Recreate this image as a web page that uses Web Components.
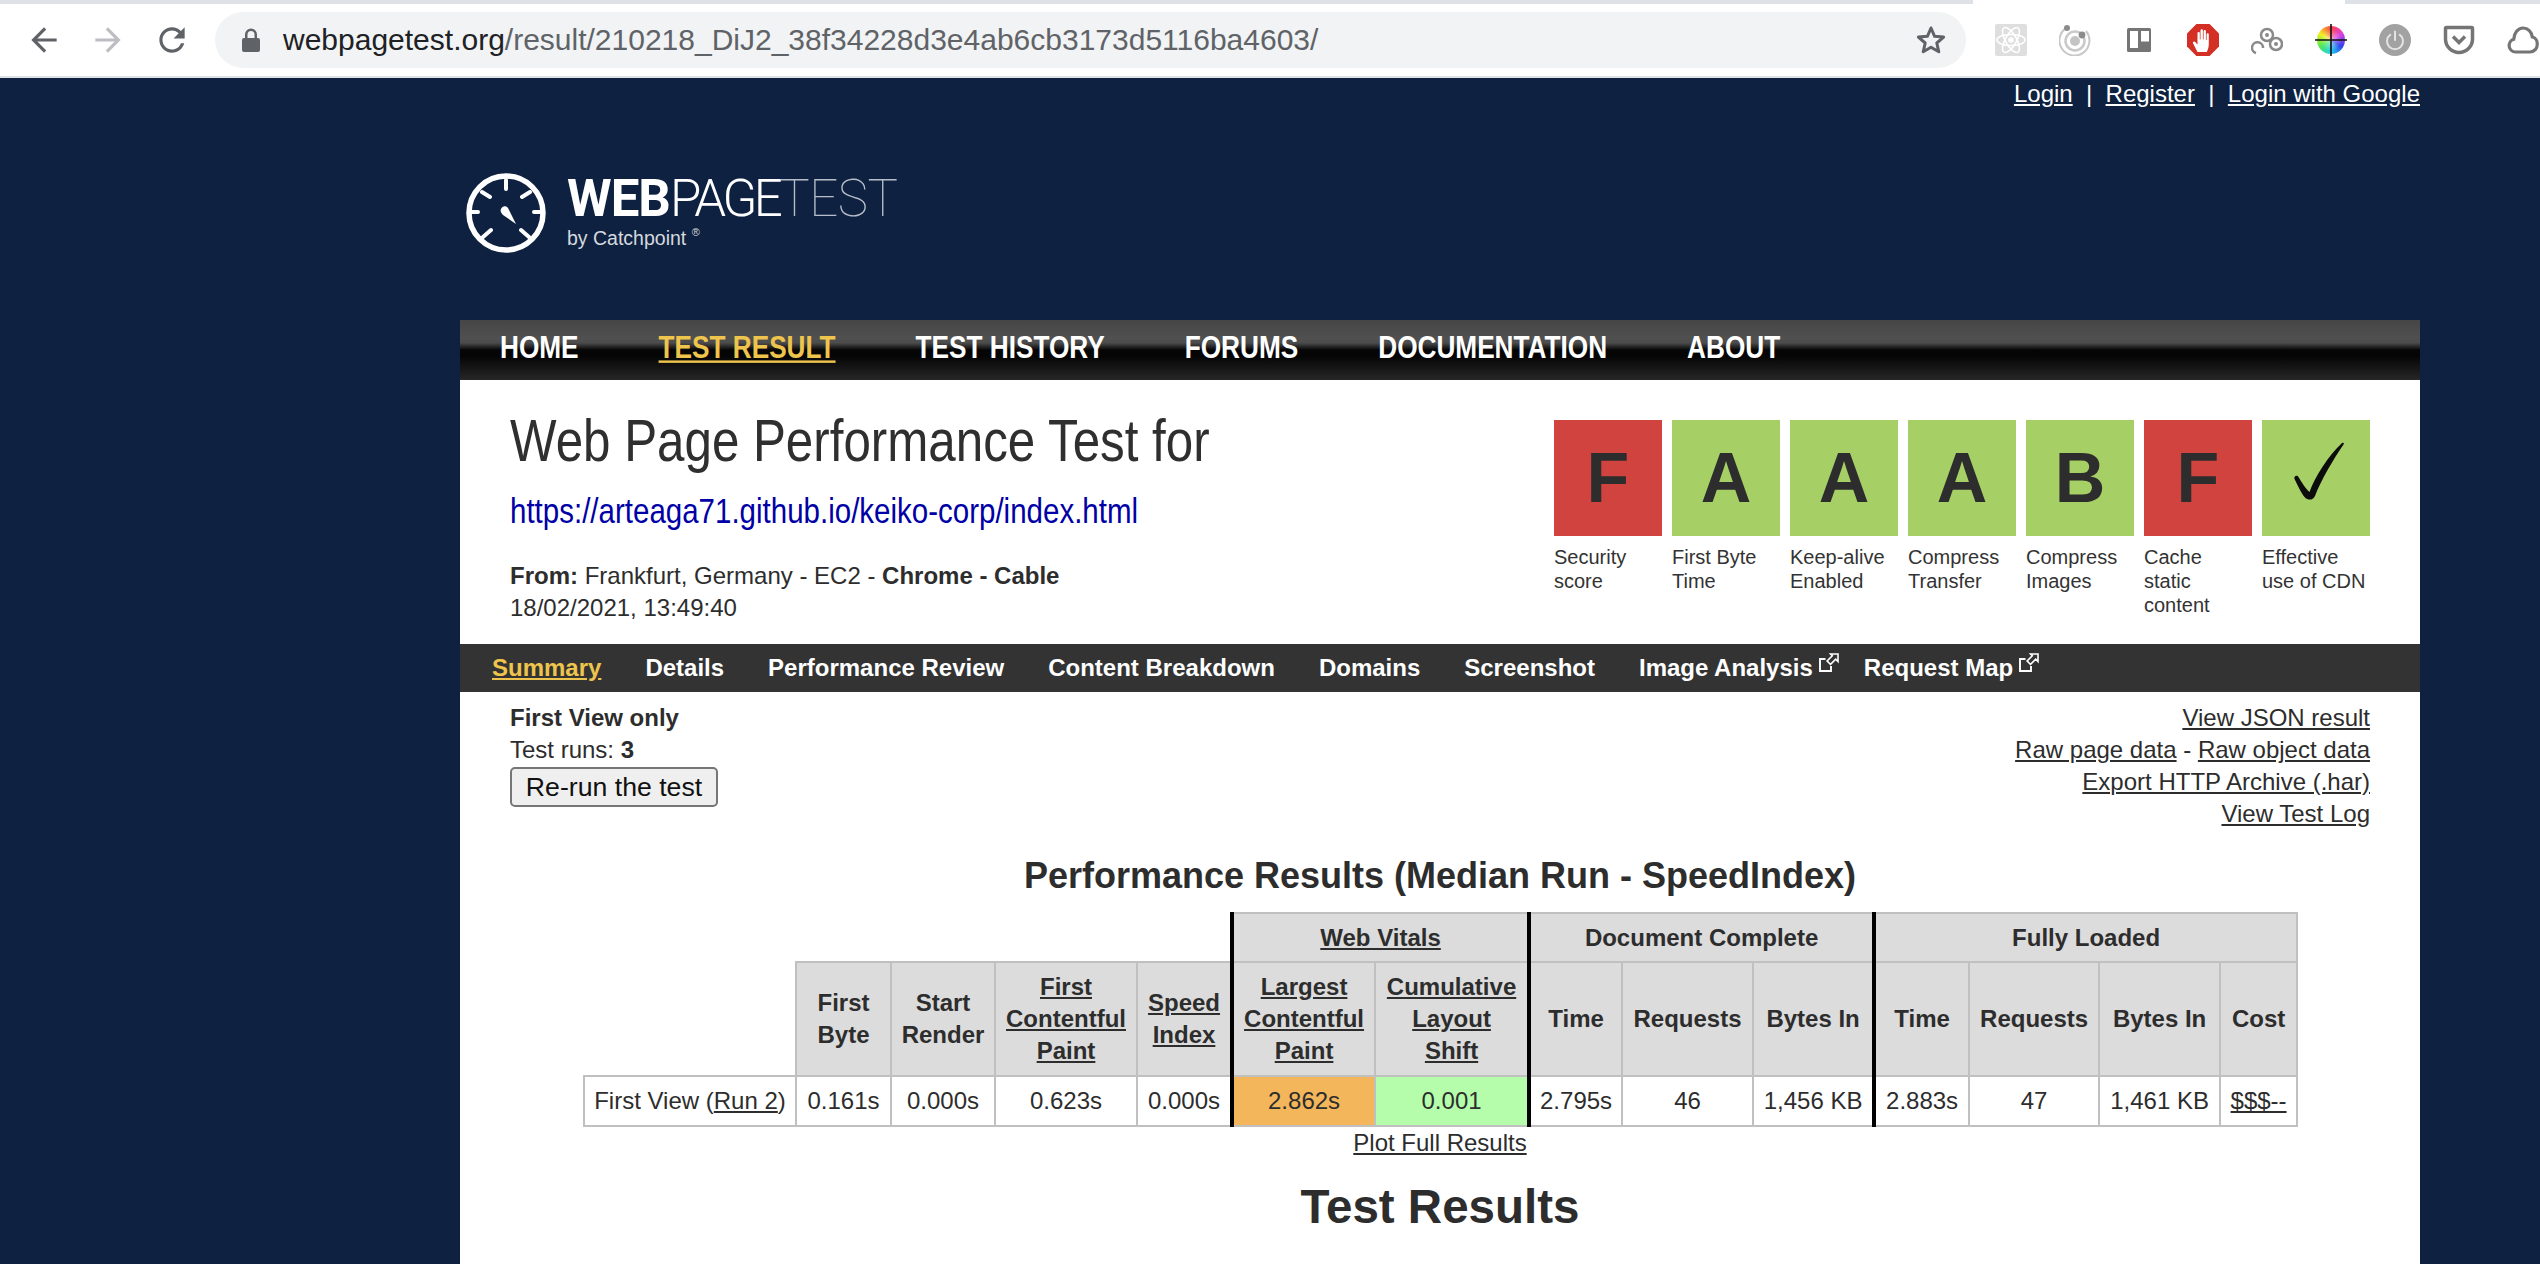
<!DOCTYPE html>
<html lang="en">
<head>
<meta charset="utf-8">
<title>WebPageTest result</title>
<style>
  html, body { margin: 0; height: 100%; overflow: hidden; background: #0e2140; }
  body { font: 24px/32px "Liberation Sans", Arial, sans-serif; color: #2d2d2d; }
</style>
</head>
<body>
<browser-bar url-host="webpagetest.org" url-path="/result/210218_DiJ2_38f34228d3e4ab6cb3173d5116ba4603/"></browser-bar>
<wpt-page>
  <top-links></top-links>
  <site-logo></site-logo>
  <main-nav></main-nav>
  <test-heading>
    <grade-box grade="F" tone="bad">Security score</grade-box>
    <grade-box grade="A" tone="good">First Byte Time</grade-box>
    <grade-box grade="A" tone="good">Keep-alive Enabled</grade-box>
    <grade-box grade="A" tone="good">Compress Transfer</grade-box>
    <grade-box grade="B" tone="good">Compress Images</grade-box>
    <grade-box grade="F" tone="bad">Cache static content</grade-box>
    <grade-box tone="good">Effective use of CDN</grade-box>
  </test-heading>
  <sub-nav></sub-nav>
  <test-info></test-info>
  <results-table></results-table>
</wpt-page>

<script>
class BrowserBar extends HTMLElement {
    constructor() {
        super();
        this.attachShadow({ mode: 'open' });
        this.shadowRoot.innerHTML = `<style>
        :host { display: flex; align-items: center; height: 72px; padding-left: 25px; background: #fff;
          border-top: 4px solid #dee1e6; border-bottom: 2px solid #dee1e6; position: relative; }
        .tab { position: absolute; left: 1973px; width: 372px; top: -4px; height: 4px; background: #fff; }
        .nav { width: 38px; height: 38px; margin-right: 26px; fill: #5f6368; flex: none; }
        .nav.off { fill: #bcbec1; }
        .omni { flex: none; width: 1751px; height: 56px; box-sizing: border-box; margin-left: -2px; margin-right: 29px;
          padding: 0 20px 0 27px; border-radius: 28px; background: #f1f3f4; display: flex; align-items: center;
          font-size: 30px; color: #5f6368; }
        .lock { width: 18px; height: 24px; margin-right: 23px; fill: #5f6368; }
        .host { color: #202124; }
        .star { margin-left: auto; width: 30px; height: 30px; fill: none; stroke: #5f6368; stroke-width: 3; stroke-linejoin: round; }
        .ext { display: flex; gap: 32px; flex: none; }
        .ext svg { width: 32px; height: 32px; display: block; }
        .wheel { width: 32px; height: 32px; position: relative; }
        .wheel i { display: block; position: absolute; inset: 2px; border-radius: 50%;
          background: radial-gradient(rgba(255,255,255,.55), rgba(255,255,255,0) 55%),
            conic-gradient(#f44 0, #e040e0 60deg, #3040f0 120deg, #20d0f0 180deg, #50e850 240deg, #f0f020 300deg, #f44 360deg); }
        .wheel svg { position: absolute; left: 0; top: 0; }
        </style>
        <div class="tab"></div>
        <svg class="nav" viewBox="0 0 24 24"><path d="M20 11H7.83l5.59-5.59L12 4l-8 8 8 8 1.41-1.41L7.83 13H20v-2z"/></svg>
        <svg class="nav off" viewBox="0 0 24 24"><path d="M4 11h12.17l-5.59-5.59L12 4l8 8-8 8-1.41-1.41L16.17 13H4v-2z"/></svg>
        <svg class="nav" viewBox="0 0 24 24"><path d="M17.65 6.35C16.2 4.9 14.21 4 12 4c-4.42 0-7.99 3.58-7.99 8s3.57 8 7.99 8c3.73 0 6.84-2.55 7.73-6h-2.08c-.82 2.33-3.04 4-5.65 4-3.31 0-6-2.69-6-6s2.69-6 6-6c1.66 0 3.14.69 4.22 1.78L13 11h7V4l-2.35 2.35z"/></svg>
        <div class="omni">
          <svg class="lock" viewBox="0 0 18 24"><path d="M2 10h1V6.500a6 6 0 0 1 12 0V10h1a2 2 0 0 1 2 2v10a2 2 0 0 1-2 2H2a2 2 0 0 1-2-2V12a2 2 0 0 1 2-2zm3.500 0h7V6.500a3.500 3.500 0 0 0-7 0z"/></svg>
          <span><span class="host">${this.getAttribute('url-host')}</span>${this.getAttribute('url-path')}</span>
          <svg class="star" viewBox="0 0 30 30"><path d="M15 3l3.600 8.300 9 .8-6.800 5.900 2 8.800-7.800-4.600-7.800 4.600 2-8.800-6.800-5.900 9-.8z"/></svg>
        </div>
        <div class="ext">
          <svg viewBox="0 0 32 32"><rect width="32" height="32" rx="2" fill="#dedede"/><g fill="none" stroke="#fff" stroke-width="1.600"><ellipse cx="16" cy="16" rx="14" ry="5.500"/><ellipse cx="16" cy="16" rx="14" ry="5.500" transform="rotate(60 16 16)"/><ellipse cx="16" cy="16" rx="14" ry="5.500" transform="rotate(120 16 16)"/></g><circle cx="16" cy="16" r="2.800" fill="#fff"/></svg>
          <svg viewBox="0 0 32 32"><g fill="none" stroke="#c9c9c9"><path d="M9 3A15 15 0 1 0 27 7" stroke-width="2"/><circle cx="16" cy="17" r="9.500" stroke-width="2.500"/></g><circle cx="16" cy="17" r="5" fill="#c4c4c4"/><circle cx="8" cy="4" r="3" fill="#8c8c8c"/><circle cx="23" cy="11" r="3.400" fill="#8c8c8c"/></svg>
          <svg viewBox="0 0 32 32"><rect x="4" y="4" width="24" height="24" rx="1.500" fill="#757575"/><rect x="7" y="7" width="8" height="17" fill="#fff"/><rect x="18" y="7" width="8" height="10.500" fill="#fff"/></svg>
          <svg viewBox="0 0 32 32"><path d="M9.400 0h13.200L32 9.400v13.200L22.600 32H9.400L0 22.600V9.400z" fill="#d32f25"/><path d="M10.500 28c-1.500-3-3.500-6.500-4.500-8.700-.7-1.600 1.200-2.600 2.300-1.300l2.200 2.700V9.300c0-1.700 2.300-1.700 2.300 0V15.500h.7V6.500c0-1.700 2.400-1.700 2.400 0v9h.7V7.300c0-1.700 2.300-1.700 2.300 0v8.700h.7v-5.500c0-1.600 2.200-1.600 2.200 0V20c0 3.300-1 6-2 8z" fill="#fff"/></svg>
          <svg viewBox="0 0 32 32"><g fill="none" stroke="#8a8a8a" stroke-width="2.500"><path d="M5 29a5.500 5.500 0 1 1 7-5"/><circle cx="16" cy="11" r="6"/><circle cx="25" cy="20" r="6"/></g><g fill="#8a8a8a"><circle cx="16" cy="11" r="2"/><circle cx="25" cy="20" r="2"/></g></svg>
          <div class="wheel"><i></i><svg viewBox="0 0 32 32"><path d="M16 0v32M0 16h32" stroke="#111" stroke-width="1.600"/></svg></div>
          <svg viewBox="0 0 32 32"><circle cx="16" cy="16" r="16" fill="#a2a2a2"/><g fill="none" stroke="#e4e4e4" stroke-width="2" stroke-linecap="round"><path d="M11.300 10.800a8 8 0 1 0 9.400 0"/><path d="M16 7.500V16"/></g></svg>
          <svg viewBox="0 0 32 32"><path d="M3.500 3.500h25c.6 0 1 .4 1 1V15a13.500 13.500 0 0 1-27 0V4.500c0-.6.400-1 1-1z" fill="none" stroke="#757575" stroke-width="3.500"/><path d="M10 12.500l6 6 6-6" fill="none" stroke="#757575" stroke-width="3.500"/></svg>
          <svg viewBox="0 0 32 32"><path d="M8.500 28a6.500 6.500 0 0 1-1.800-12.700C7 9 11 4 16 4c5 0 8.700 4 9.300 9 3 .6 5 3.500 5 7 0 4.500-3 8-7.300 8z" fill="none" stroke="#757575" stroke-width="3.200"/></svg>
        </div>`;
    }
}
customElements.define('browser-bar', BrowserBar);

class WptPage extends HTMLElement {
    constructor() {
        super();
        this.attachShadow({ mode: 'open' });
        this.shadowRoot.innerHTML = `<style>
        :host { display: flex; flex-direction: column; width: 1960px; margin-left: 460px; }
        </style><slot></slot>`;
    }
}
customElements.define('wpt-page', WptPage);

class TopLinks extends HTMLElement {
    constructor() {
        super();
        this.attachShadow({ mode: 'open' });
        this.shadowRoot.innerHTML = `<style>
        :host { display: flex; justify-content: flex-end; height: 32px; color: #fff; white-space: pre; }
        a { color: inherit; text-decoration: underline; }
        </style><a href="#">Login</a>  |  <a href="#">Register</a>  |  <a href="#">Login with Google</a>`;
    }
}
customElements.define('top-links', TopLinks);

class SiteLogo extends HTMLElement {
    constructor() {
        super();
        this.attachShadow({ mode: 'open' });
        this.shadowRoot.innerHTML = `<style>
        :host { display: flex; align-items: center; gap: 21px; height: 210px; box-sizing: border-box; padding: 0 0 4px 6px; color: #fff; }
        svg { width: 80px; height: 80px; flex: none; }
        .name { font: 100 51px/44px Roboto, "Liberation Sans", sans-serif; white-space: nowrap; color: #b6bdc9; letter-spacing: -.5px; }
        .name b { font-weight: 700; color: #fff; letter-spacing: -1px; }
        .name i { font-style: normal; font-weight: 300; color: #fff; letter-spacing: -3.500px; }
        .by { font: 19.500px/24px "Liberation Sans", sans-serif; color: #d5d9df; margin-top: 5px; }
        sup { font-size: 11px; line-height: 0; vertical-align: 9px; }
        </style>
        <svg viewBox="0 0 80 80"><circle cx="40" cy="40" r="37" fill="none" stroke="#fff" stroke-width="5.500"/>
          <path d="M40 7v9M16 19l8 5M64 19l-8 5M3 39h9M77 39h-9M17 64l8-7M63 64l-8-7" stroke="#fff" stroke-width="4" stroke-linecap="round"/>
          <path d="M35 36C36 33 40 32 42 35L50 51 37 42C35 40 34 38 35 36z" fill="#fff"/></svg>
        <div><div class="name"><b>WEB</b><i>PAGE</i>TEST</div><div class="by">by Catchpoint <sup>®</sup></div></div>`;
    }
}
customElements.define('site-logo', SiteLogo);

class MainNav extends HTMLElement {
    constructor() {
        super();
        this.attachShadow({ mode: 'open' });
        const items = ['HOME', 'TEST RESULT', 'TEST HISTORY', 'FORUMS', 'DOCUMENTATION', 'ABOUT'];
        this.shadowRoot.innerHTML = `<style>
        :host { display: flex; align-items: center; gap: 80px; height: 60px; box-sizing: border-box; padding: 0 0 6px 40px;
          background: linear-gradient(#454545 0, #505050 30%, #4c4c4c 38%, #050505 50%, #050505 60%, #272727 100%); }
        /* the original font is a narrow cut: same widths as a smaller size, stretched up */
        a { display: block; font: bold 26.200px/40px "Liberation Sans", sans-serif; transform: scaleY(1.22); color: #fff; text-decoration: none; white-space: nowrap; }
        a.on { color: #eec44d; text-decoration: underline; }
        </style>${items.map(t => `<a href="#" class="${t === 'TEST RESULT' ? 'on' : ''}">${t}</a>`).join('')}`;
    }
}
customElements.define('main-nav', MainNav);

class TestHeading extends HTMLElement {
    constructor() {
        super();
        this.attachShadow({ mode: 'open' });
        this.shadowRoot.innerHTML = `<style>
        :host { display: flex; justify-content: space-between; background: #fff; height: 264px; box-sizing: border-box; padding: 0 50px; }
        h1 { margin: 32px 0 0; font: 400 49.300px/56px "Liberation Sans", sans-serif; color: #2f2f2f; white-space: nowrap; transform: scaleY(1.21); }
        .url { display: block; margin-top: 19px; font: 29.500px/48px "Liberation Sans", sans-serif; color: #0000a6; text-decoration: none; white-space: nowrap; transform: scaleY(1.22); }
        .from { margin-top: 25px; }
        .grades { display: flex; gap: 10px; padding-top: 40px; }
        </style>
        <div>
          <h1>Web Page Performance Test for</h1>
          <a class="url" href="#">https://arteaga71.github.io/keiko-corp/index.html</a>
          <div class="from"><b>From:</b> Frankfurt, Germany - EC2 - <b>Chrome - Cable</b><br>18/02/2021, 13:49:40</div>
        </div>
        <div class="grades"><slot></slot></div>`;
    }
}
customElements.define('test-heading', TestHeading);

class GradeBox extends HTMLElement {
    constructor() {
        super();
        this.attachShadow({ mode: 'open' });
        const bg = this.getAttribute('tone') === 'bad' ? '#d1433f' : '#a6cf66';
        const grade = this.getAttribute('grade');
        const check = `<svg viewBox="0 0 108 116" width="108" height="116" role="img" aria-label="check">
          <path d="M32.500 59C31.500 56 35 54.500 36.500 57C40 63 44 69 47.500 72C53 57 66 36 80 23C81.500 22 82.500 23.500 81.500 24.500C71 40 59 60 53 76C51 80.500 46 80.500 43 77.500C39 73 35.500 65 32.500 59z" fill="#0c0c0c"/></svg>`;
        this.shadowRoot.innerHTML = `<style>
        :host { display: block; width: 108px; font-size: 20px; line-height: 24px; color: #333; }
        .box { height: 116px; margin-bottom: 9px; background: ${bg}; display: flex; align-items: center; justify-content: center;
          font: bold 70px/116px "Liberation Sans", sans-serif; color: #2d2d2d; }
        svg { display: block; }
        </style><div class="box">${grade || check}</div><slot></slot>`;
    }
}
customElements.define('grade-box', GradeBox);

class SubNav extends HTMLElement {
    constructor() {
        super();
        this.attachShadow({ mode: 'open' });
        const ext = `<svg viewBox="0 0 20 19"><path d="M6.500 6H1v12h11v-5" fill="none" stroke="#fff" stroke-width="1.900"/><path d="M11.500 1H19v7.500l-2.300-2.300-5.200 5.200-3.400-3.400 5.200-5.200z" fill="none" stroke="#fff" stroke-width="1.600"/></svg>`;
        this.shadowRoot.innerHTML = `<style>
        :host { display: flex; align-items: center; height: 48px; padding-left: 32px; background: #333; gap: 44px; }
        a { font-weight: bold; color: #fff; text-decoration: none; white-space: nowrap; display: flex; }
        a.on { color: #eec44d; text-decoration: underline; }
        a.ext { margin-right: -19px; }
        svg { width: 20px; height: 19px; margin: 1px 0 0 6px; }
        </style>
        <a class="on" href="#">Summary</a><a href="#">Details</a><a href="#">Performance Review</a><a href="#">Content Breakdown</a>
        <a href="#">Domains</a><a href="#">Screenshot</a><a class="ext" href="#">Image Analysis${ext}</a><a href="#">Request Map${ext}</a>`;
    }
}
customElements.define('sub-nav', SubNav);

class TestInfo extends HTMLElement {
    constructor() {
        super();
        this.attachShadow({ mode: 'open' });
        this.shadowRoot.innerHTML = `<style>
        :host { display: flex; justify-content: space-between; background: #fff; height: 161px; box-sizing: border-box; padding: 10px 50px 0; }
        .right { text-align: right; }
        a { color: inherit; }
        button { display: block; margin-top: 1px; width: 208px; height: 40px; padding: 0; font: 26.670px "Liberation Sans", sans-serif; color: #111;
          background: #efefef; border: 2px solid #767676; border-radius: 5px; }
        </style>
        <div><b>First View only</b><br>Test runs: <b>3</b><button>Re-run the test</button></div>
        <div class="right"><a href="#">View JSON result</a><br><a href="#">Raw page data</a> - <a href="#">Raw object data</a><br><a href="#">Export HTTP Archive (.har)</a><br><a href="#">View Test Log</a></div>`;
    }
}
customElements.define('test-info', TestInfo);

class ResultsTable extends HTMLElement {
    constructor() {
        super();
        this.attachShadow({ mode: 'open' });
        const widths = [212, 95, 104, 142, 95, 143, 154, 93, 131, 121, 95, 130, 121, 77];
        this.shadowRoot.innerHTML = `<style>
        :host { display: block; background: #fff; height: 411px; overflow: hidden; text-align: center; }
        h2 { margin: 0; padding: 1px 0 14px; font: bold 36px/44px "Liberation Sans", sans-serif; }
        table { table-layout: fixed; border-collapse: collapse; width: 1713px; margin: 0 0 0 123px; }
        th, td { border: 2px solid #c0c0c0; padding: 0; }
        th { background: #dcdcdc; font-weight: bold; }
        td { height: 48px; }
        .blank { border: 0; background: none; }
        .top { height: 49px; }
        .thick { border-left: 4px solid #000; }
        .mid { height: 114px; }
        .warn { background: #f4b65b; }
        .ok { background: #b5fdab; }
        a { color: inherit; }
        .plot { display: block; }
        h1 { margin: 20px 0 0; font: bold 47.500px/56px "Liberation Sans", sans-serif; }
        </style>
        <h2>Performance Results (Median Run - SpeedIndex)</h2>
        <table>
          <colgroup>${widths.map(w => `<col style="width:${w}px">`).join('')}</colgroup>
          <tr class="top">
            <th class="blank" colspan="5"></th>
            <th class="thick" colspan="2"><a href="#">Web Vitals</a></th>
            <th class="thick" colspan="3">Document Complete</th>
            <th class="thick" colspan="4">Fully Loaded</th>
          </tr>
          <tr class="mid">
            <th class="blank"></th>
            <th>First<br>Byte</th>
            <th>Start<br>Render</th>
            <th><a href="#">First<br>Contentful<br>Paint</a></th>
            <th><a href="#">Speed<br>Index</a></th>
            <th class="thick"><a href="#">Largest<br>Contentful<br>Paint</a></th>
            <th><a href="#">Cumulative<br>Layout<br>Shift</a></th>
            <th class="thick">Time</th><th>Requests</th><th>Bytes In</th>
            <th class="thick">Time</th><th>Requests</th><th>Bytes In</th><th>Cost</th>
          </tr>
          <tr>
            <td>First View (<a href="#">Run 2</a>)</td>
            <td>0.161s</td><td>0.000s</td><td>0.623s</td><td>0.000s</td>
            <td class="thick warn">2.862s</td><td class="ok">0.001</td>
            <td class="thick">2.795s</td><td>46</td><td>1,456 KB</td>
            <td class="thick">2.883s</td><td>47</td><td>1,461 KB</td><td><a href="#">$$$--</a></td>
          </tr>
        </table>
        <a class="plot" href="#">Plot Full Results</a>
        <h1>Test Results</h1>`;
    }
}
customElements.define('results-table', ResultsTable);
</script>
</body>
</html>
